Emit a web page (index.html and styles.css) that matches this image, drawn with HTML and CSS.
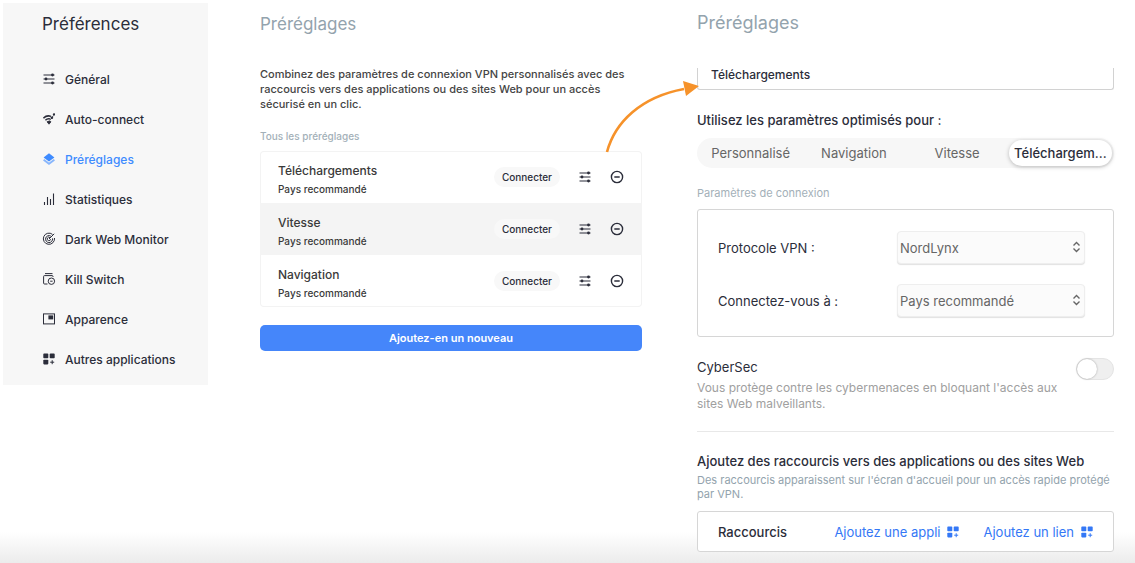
FILE: index.html
```html
<!DOCTYPE html>
<html lang="fr">
<head>
    <meta charset="UTF-8">
    <meta name="viewport" content="width=device-width, initial-scale=1.0">
    <title>Préférences - Préréglages</title>
    <link rel="stylesheet" href="styles.css">
</head>
<body>

    <!-- Shared icons -->
    <svg class="sprite" aria-hidden="true">
        <symbol id="icon-sliders" viewBox="0 0 12 12">
            <path d="M0.5 2h11M0.5 6h11M0.5 10h11" stroke="currentColor" stroke-width="1.2"/>
            <circle cx="9.5" cy="2" r="1.4"/>
            <circle cx="3" cy="6" r="1.4"/>
            <circle cx="9.5" cy="10" r="1.4"/>
        </symbol>
        <symbol id="icon-minus" viewBox="0 0 14 14">
            <circle cx="7" cy="7" r="5.6" fill="none" stroke="currentColor" stroke-width="1.4"/>
            <path d="M4.3 7h5.4" stroke="currentColor" stroke-width="1.5"/>
        </symbol>
        <symbol id="icon-apps" viewBox="0 0 12 12">
            <rect x="0.3" y="0.6" width="5" height="4.6" rx="0.8"/>
            <rect x="6.7" y="0.6" width="5" height="4.6" rx="0.8"/>
            <rect x="0.3" y="6.8" width="5" height="4.6" rx="0.8"/>
            <path d="M9.2 7.2v4M7.2 9.2h4" stroke="currentColor" stroke-width="1"/>
        </symbol>
    </svg>

    <div class="page">
        <aside class="sidebar">
            <h1>Préférences</h1>
            <nav>
                <a href="#general"><svg class="icon"><use href="#icon-sliders"/></svg>Général</a>
                <a href="#auto-connect">
                    <svg class="icon" viewBox="0 0 12 12">
                        <path d="M0.4 5.2C2.6 3 5.4 2.4 8 3.4M2.4 7.3C3.8 5.9 5.4 5.5 7 6" fill="none" stroke="currentColor" stroke-width="1.5"/>
                        <path d="M4 8.8Q6 7.4 8 8.8L6 11.2zM6.6 7.6L10.4 2.6" stroke="currentColor" stroke-width="0.8"/>
                        <circle cx="11" cy="1.4" r="1.2"/>
                        <circle cx="8.9" cy="4.7" r="1.3"/>
                    </svg>
                    Auto-connect
                </a>
                <a href="#prereglages" class="active">
                    <svg class="icon" viewBox="0 0 12 12">
                        <path d="M6 0.2L11.4 4.4L6 8.6L0.6 4.4z"/>
                        <path d="M0.6 6.8L6 10.8L11.4 6.8" fill="none" stroke="currentColor" stroke-width="1.8" opacity="0.6"/>
                    </svg>
                    Préréglages
                </a>
                <a href="#statistiques">
                    <svg class="icon" viewBox="0 0 12 12">
                        <path d="M1.5 9v3M4.5 4v8M7.5 6v6M10.5 0.5V12" stroke="currentColor" stroke-width="1.1"/>
                    </svg>
                    Statistiques
                </a>
                <a href="#dark-web">
                    <svg class="icon outline" viewBox="0 0 12 12">
                        <path d="M9.5 1.4A5.6 5.6 0 1 0 11.5 5M7.9 3.1A3.5 3.5 0 1 0 9.5 5.4M7 4.6A1.7 1.7 0 1 0 7.6 6.2M6 6L11.2 0.8"/>
                    </svg>
                    Dark Web Monitor
                </a>
                <a href="#kill-switch">
                    <svg class="icon outline" viewBox="0 0 12 12">
                        <path d="M2 0.6h7.5M4.5 11H1.5Q0.6 11 0.6 10V3.5Q0.6 2.6 1.5 2.6H9Q10 2.6 10 3.5V4"/>
                        <circle cx="8.4" cy="8.2" r="3.2"/>
                        <path d="M7.2 8.2h2.4"/>
                    </svg>
                    Kill Switch
                </a>
                <a href="#apparence">
                    <svg class="icon" viewBox="0 0 12 12">
                        <rect x="0.5" y="0.9" width="11" height="10" fill="none" stroke="currentColor" stroke-width="1"/>
                        <rect x="5.4" y="2.4" width="4.8" height="4"/>
                    </svg>
                    Apparence
                </a>
                <a href="#applications"><svg class="icon"><use href="#icon-apps"/></svg>Autres applications</a>
            </nav>
        </aside>

        <main class="presets">
            <h2>Préréglages</h2>
            <p class="intro">Combinez des paramètres de connexion VPN personnalisés avec des raccourcis vers des applications ou des sites Web pour un accès sécurisé en un clic.</p>
            <h3 class="caption">Tous les préréglages</h3>

            <ul class="preset-list">
                <li>
                    <div class="preset-name">
                        <strong>Téléchargements</strong>
                        <span>Pays recommandé</span>
                    </div>
                    <button class="btn-connect">Connecter</button>
                    <button class="btn-icon" aria-label="Modifier"><svg class="icon"><use href="#icon-sliders"/></svg></button>
                    <button class="btn-icon" aria-label="Supprimer"><svg class="icon-lg"><use href="#icon-minus"/></svg></button>
                </li>
                <li class="selected">
                    <div class="preset-name">
                        <strong>Vitesse</strong>
                        <span>Pays recommandé</span>
                    </div>
                    <button class="btn-connect">Connecter</button>
                    <button class="btn-icon" aria-label="Modifier"><svg class="icon"><use href="#icon-sliders"/></svg></button>
                    <button class="btn-icon" aria-label="Supprimer"><svg class="icon-lg"><use href="#icon-minus"/></svg></button>
                </li>
                <li>
                    <div class="preset-name">
                        <strong>Navigation</strong>
                        <span>Pays recommandé</span>
                    </div>
                    <button class="btn-connect">Connecter</button>
                    <button class="btn-icon" aria-label="Modifier"><svg class="icon"><use href="#icon-sliders"/></svg></button>
                    <button class="btn-icon" aria-label="Supprimer"><svg class="icon-lg"><use href="#icon-minus"/></svg></button>
                </li>
            </ul>

            <button class="btn-add">Ajoutez-en un nouveau</button>

            <!-- Arrow from the list to the edit panel -->
            <svg class="arrow" viewBox="0 0 96 76" aria-hidden="true">
                <path d="M2 73C10 43 36 18 79 10" fill="none" stroke="#f6922a" stroke-width="2.6"/>
                <path d="M78 2L94 7L81 17z" fill="#f6922a"/>
            </svg>
        </main>

        <section class="editor">
            <h2>Préréglages</h2>
            <input type="text" class="preset-input" value="Téléchargements" aria-label="Nom du préréglage">

            <h3>Utilisez les paramètres optimisés pour :</h3>
            <div class="segmented">
                <button>Personnalisé</button>
                <button>Navigation</button>
                <button>Vitesse</button>
                <button class="active">Téléchargem...</button>
            </div>

            <h4 class="caption">Paramètres de connexion</h4>
            <div class="box settings">
                <label for="protocol">Protocole VPN :</label>
                <div class="select">
                    <select id="protocol">
                        <option>NordLynx</option>
                    </select>
                    <svg viewBox="0 0 8 12"><path d="M1 4.5L4 1.5L7 4.5M1 7.5L4 10.5L7 7.5"/></svg>
                </div>
                <label for="country">Connectez-vous à :</label>
                <div class="select">
                    <select id="country">
                        <option>Pays recommandé</option>
                    </select>
                    <svg viewBox="0 0 8 12"><path d="M1 4.5L4 1.5L7 4.5M1 7.5L4 10.5L7 7.5"/></svg>
                </div>
            </div>

            <div class="cybersec">
                <div>
                    <label for="cybersec">CyberSec</label>
                    <p>Vous protège contre les cybermenaces en bloquant l'accès aux sites Web malveillants.</p>
                </div>
                <input type="checkbox" id="cybersec" class="switch">
            </div>

            <h3>Ajoutez des raccourcis vers des applications ou des sites Web</h3>
            <p class="hint">Des raccourcis apparaissent sur l'écran d'accueil pour un accès rapide protégé par VPN.</p>
            <div class="box shortcuts">
                <span>Raccourcis</span>
                <a href="#add-app">Ajoutez une appli <svg class="icon"><use href="#icon-apps"/></svg></a>
                <a href="#add-link">Ajoutez un lien <svg class="icon"><use href="#icon-apps"/></svg></a>
            </div>
        </section>
    </div>

</body>
</html>
```
FILE: styles.css
```css
* {
    box-sizing: border-box;
}

body {
    margin: 0;
    min-height: 100vh;
    font-family: Inter, "Liberation Sans", sans-serif;
    font-size: 13px;
    color: #2b2d3a;
    background: #fff linear-gradient(#fff, #ebebeb) no-repeat bottom / 100% 32px;
}

h1, h2, h3, h4, p, ul {
    margin: 0;
    padding: 0;
}

button, input, select {
    font: inherit;
    color: inherit;
}

button {
    padding: 0;
    border: none;
    background: none;
    cursor: pointer;
}

a {
    color: inherit;
    text-decoration: none;
}

.sprite {
    display: none;
}

.icon {
    width: 12px;
    height: 12px;
    fill: currentColor;
    flex: none;
}

.icon.outline {
    fill: none;
    stroke: currentColor;
    stroke-width: 1;
    overflow: visible;
}

.icon-lg {
    width: 14px;
    height: 14px;
}

.page {
    display: grid;
    grid-template-columns: 205px 434fr 472fr;
    align-items: start;
    padding: 3px 21px 12px 3px;
}

h1, h2 {
    font-size: 17px;
    line-height: 24px;
    font-weight: 400;
}

h2 {
    color: #93a3ad;
}

.caption {
    font-size: 10px;
    line-height: 16px;
    font-weight: 500;
    color: #a3b0b8;
}

/* Sidebar */
.sidebar {
    padding: 9px 0 6px 39px;
    background-color: #f7f7f7;
}

.sidebar nav {
    margin-top: 23px;
}

.sidebar a {
    display: flex;
    align-items: center;
    gap: 10px;
    height: 40px;
    padding-left: 1px;
    font-size: 12px;
    font-weight: 500;
}

.sidebar a.active {
    color: #3e8bff;
}

/* Preset list */
.presets {
    position: relative;
    padding: 9px 0 0 52px;
}

.intro {
    margin-top: 31px;
    font-size: 11px;
    line-height: 15px;
    font-weight: 500;
    color: #444;
}

.presets .caption {
    margin-top: 16px;
}

.preset-list {
    margin-top: 7px;
    border-radius: 4px;
    box-shadow: inset 0 0 0 1px #f3f3f3;
    list-style: none;
}

.preset-list li {
    display: flex;
    align-items: center;
    height: 52px;
    padding: 0 18px;
}

.preset-list li.selected {
    background-color: #f4f4f4;
}

.preset-name {
    flex: 1;
    display: flex;
    flex-direction: column;
    padding-top: 6px;
    color: #3a3a3a;
}

.preset-name strong {
    font-size: 12px;
    line-height: 18px;
    font-weight: 500;
}

.preset-name span {
    font-size: 10px;
    line-height: 18px;
    font-weight: 500;
}

.btn-connect {
    height: 20px;
    padding: 0 8px;
    border-radius: 10px;
    background-color: #f8f8f8;
    font-size: 10px;
    font-weight: 500;
}

.btn-icon {
    display: flex;
    margin-left: 19px;
}

.btn-add {
    width: 100%;
    height: 26px;
    margin-top: 18px;
    border-radius: 5px;
    background-color: #4586fa;
    color: #fff;
    font-size: 11px;
    font-weight: 600;
}

.arrow {
    position: absolute;
    top: 76px;
    right: -59px;
    width: 96px;
    height: 76px;
}

/* Edit panel */
.editor {
    padding: 8px 0 0 55px;
}

.editor h2 {
    font-size: 18px;
}

.editor h3 {
    font-size: 13px;
    line-height: 20px;
    font-weight: 500;
}

.preset-input {
    display: block;
    width: 100%;
    height: 22px;
    margin: 33px 0 20px;
    padding: 0 13px 8px;
    border: 1px solid #d2d2d2;
    border-top: none;
    border-radius: 0 0 3px 3px;
    font-size: 12px;
    font-weight: 500;
}

.segmented {
    display: grid;
    grid-template-columns: repeat(4, 1fr);
    margin-top: 8px;
    padding: 2px;
    border-radius: 15px;
    background-color: #f7f7f7;
}

.segmented button {
    height: 26px;
    border-radius: 13px;
    font-size: 13px;
    color: #666;
}

.segmented button.active {
    background-color: #fff;
    box-shadow: 0 1px 4px rgba(0, 0, 0, 0.25);
    color: #2b2d3a;
    font-weight: 500;
}

.editor .caption {
    margin-top: 17px;
    font-size: 11px;
    font-weight: 400;
}

.box {
    border: 1px solid #d6d6d6;
    border-radius: 3px;
    background-color: #fff;
}

.settings {
    display: grid;
    grid-template-columns: 1fr 188px;
    align-items: center;
    row-gap: 20px;
    margin-top: 8px;
    padding: 21px 28px 19px 20px;
}

.select {
    position: relative;
}

.select select {
    display: block;
    width: 100%;
    height: 33px;
    padding: 0 2px;
    border: 1px solid #eee;
    border-radius: 4px;
    background-color: #fbfbfb;
    box-shadow: 0 1px 1px rgba(0, 0, 0, 0.12);
    appearance: none;
    color: #666;
}

.select svg {
    position: absolute;
    top: 10px;
    right: 4px;
    width: 9px;
    height: 12px;
    fill: none;
    stroke: #666;
    stroke-width: 1.4;
    pointer-events: none;
}

.cybersec {
    display: flex;
    justify-content: space-between;
    gap: 12px;
    margin-bottom: 19px;
    padding: 20px 0 19px;
    border-bottom: 1px solid #e8e8e8;
}

.cybersec label {
    display: block;
    line-height: 20px;
}

.cybersec p {
    margin-top: 3px;
    font-size: 12px;
    line-height: 16px;
    color: #a0a0a0;
}

.switch {
    flex: none;
    display: flex;
    width: 38px;
    height: 22px;
    margin: 1px 0 0;
    border: 1px solid #e4e4e4;
    border-radius: 11px;
    background-color: #efefef;
    appearance: none;
}

.switch::before {
    content: "";
    width: 20px;
    height: 20px;
    border-radius: 50%;
    background-color: #fff;
    box-shadow: 0 0 2px rgba(0, 0, 0, 0.35);
}

.switch:checked {
    justify-content: flex-end;
    background-color: #4586fa;
}

.hint {
    margin-top: 2px;
    font-size: 11px;
    line-height: 14px;
    color: #93a3ad;
}

.shortcuts {
    display: flex;
    align-items: center;
    height: 41px;
    margin-top: 10px;
    padding: 0 20px;
}

.shortcuts span {
    flex: 1;
    font-weight: 500;
}

.shortcuts a {
    display: flex;
    align-items: center;
    gap: 7px;
    margin-left: 24px;
    color: #3478f6;
}
```
